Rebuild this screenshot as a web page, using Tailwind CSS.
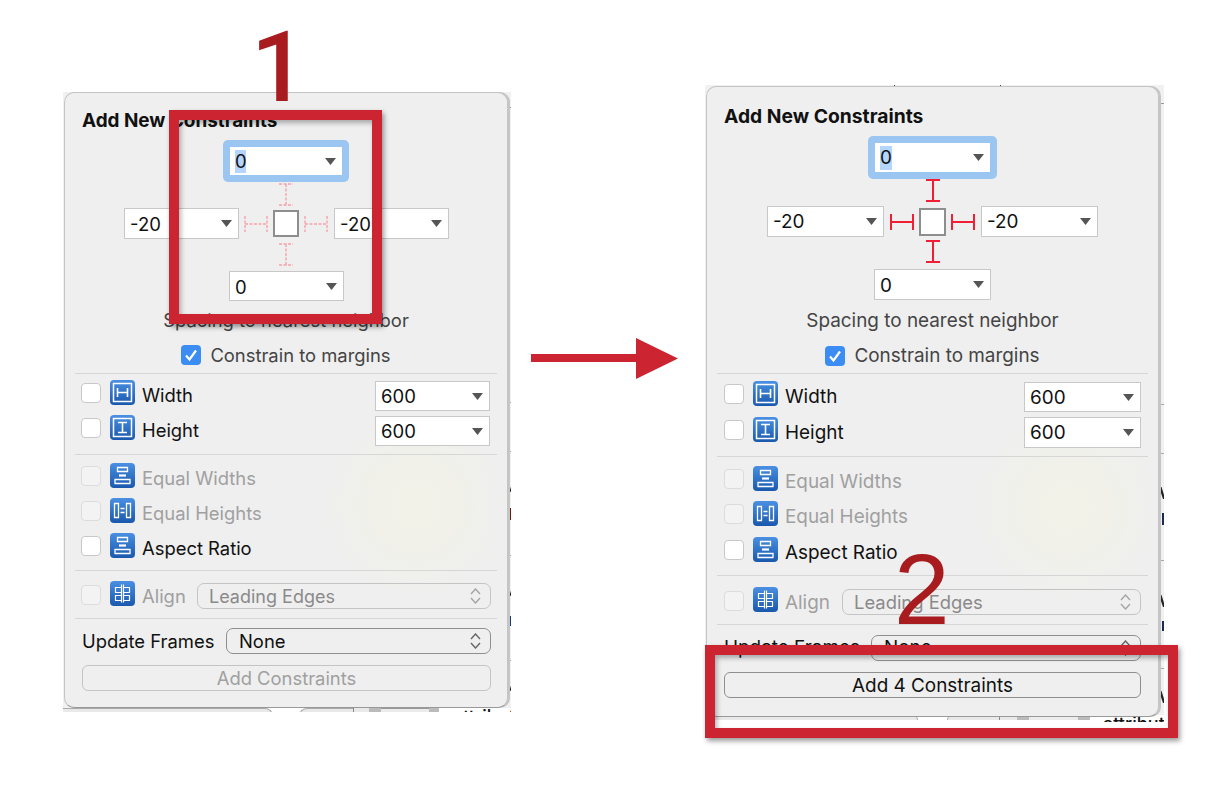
<!DOCTYPE html>
<html lang="en">
<head>
  <meta charset="UTF-8" />
  <title>Add New Constraints</title>
  <script src="https://cdn.jsdelivr.net/npm/@tailwindcss/browser@4"></script>
</head>
<body class="relative w-[1224px] h-[806px] bg-white overflow-hidden font-['Inter',sans-serif] text-[18.400px] leading-none text-[#111]">

  <!-- shared icons -->
  <svg class="absolute w-0 h-0">
    <defs>
      <linearGradient id="blue" x1="0" y1="0" x2="0" y2="1"><stop offset="0" stop-color="#4a90e2"/><stop offset="1" stop-color="#1a58ad"/></linearGradient>
    </defs>
    <symbol id="drop" viewBox="0 0 11 7"><path d="M0 0h11L5.500 7z" fill="#555"/></symbol>
    <symbol id="updown" viewBox="0 0 11 16"><path d="M1 6l4.500-5L10 6M1 10l4.500 5L10 10" fill="none" stroke="currentColor" stroke-width="1.400"/></symbol>
    <symbol id="tick" viewBox="0 0 20 20"><path d="M5 10.500l3.500 4L15 5.500" fill="none" stroke="#fff" stroke-width="2.200"/></symbol>
    <symbol id="i-width" viewBox="0 0 25 25"><rect width="25" height="25" rx="4" fill="url(#blue)"/><rect x="3.500" y="3.500" width="18" height="18" fill="none" stroke="#fff" stroke-width="1.500"/><path d="M7.500 8v9M17.500 8v9M7.500 12.500h10" fill="none" stroke="#fff" stroke-width="1.600"/></symbol>
    <symbol id="i-height" viewBox="0 0 25 25"><rect width="25" height="25" rx="4" fill="url(#blue)"/><rect x="3.500" y="3.500" width="18" height="18" fill="none" stroke="#fff" stroke-width="1.500"/><path d="M8 7.500h9M8 17.500h9M12.500 7.500v10" fill="none" stroke="#fff" stroke-width="1.600"/></symbol>
    <symbol id="i-eqw" viewBox="0 0 25 25"><rect width="25" height="25" rx="4" fill="url(#blue)"/><path d="M7.500 4.500h10v4h-10zM5 16.500h15v4H5z" fill="none" stroke="#fff" stroke-width="1.300"/><path d="M9 12.500h7" stroke="#fff" stroke-width="2.200"/></symbol>
    <symbol id="i-eqh" viewBox="0 0 25 25"><rect width="25" height="25" rx="4" fill="url(#blue)"/><path d="M4.500 5.500h4v14h-4zM16.500 5.500h4v14h-4z" fill="none" stroke="#fff" stroke-width="1.300"/><path d="M10.500 10.500h4M10.500 14.500h4" stroke="#fff" stroke-width="1.500"/></symbol>
    <symbol id="i-align" viewBox="0 0 25 25"><rect width="25" height="25" rx="4" fill="url(#blue)"/><path d="M11.500 3.500v18M13.500 3.500v18M11.500 6.500h-6v5h6M11.500 14.500h-6v5h6M13.500 6.500h6v5h-6M13.500 14.500h6v5h-6" fill="none" stroke="#fff" stroke-width="1.200"/></symbol>
    <symbol id="strut-v" viewBox="0 0 16 23"><path d="M1 1h14M8 1v21M1 22h14" fill="none" stroke="#f01f35" stroke-width="2"/></symbol>
    <symbol id="strut-h" viewBox="0 0 24 16"><path d="M1 0v16M1 8h22M23 0v16" fill="none" stroke="#f01f35" stroke-width="2"/></symbol>
    <symbol id="dash-v" viewBox="0 0 16 23"><path d="M1 1h14M1 22h14M8 1v21" fill="none" stroke="#f5a3ab" stroke-width="1.400" stroke-dasharray="3 1.500"/></symbol>
    <symbol id="dash-h" viewBox="0 0 24 16"><path d="M1 0v16M23 0v16M1 8h22" fill="none" stroke="#f5a3ab" stroke-width="1.400" stroke-dasharray="3 1.500"/></symbol>
    <symbol id="v-arm" viewBox="0 0 5 12"><path d="M0 0h2.500L5 8v4H4z" fill="#222"/></symbol>
  </svg>

  <!-- BEFORE: screenshot on the left -->
  <div class="absolute left-[63px] top-[92px] w-[448px] h-[620px] bg-[#f1f1f1] overflow-hidden">
    <!-- backdrop slivers around the popover -->
    <div class="absolute right-0 top-[15px] w-[3px] h-px bg-[#999]"></div>
    <div class="absolute right-0 top-[310px] w-[3px] h-px bg-[#aaa]"></div>
    <div class="absolute right-0 top-[359px] w-[3px] h-px bg-[#aaa]"></div>
    <svg class="absolute right-0 top-[392px] w-[3px] h-[9px]"><use href="#v-arm"/></svg>
    <div class="absolute right-0 top-[416px] w-[2px] h-[12px] bg-[#6b1a12]"></div>
    <div class="absolute right-0 top-[463px] w-[3px] h-px bg-[#aaa]"></div>
    <svg class="absolute right-0 top-[496px] w-[3px] h-[9px]"><use href="#v-arm"/></svg>
    <div class="absolute right-0 top-[524px] w-[2px] h-[10px] bg-[#1c3a78]"></div>
    <div class="absolute right-0 top-[568px] w-[3px] h-px bg-[#aaa]"></div>
    <svg class="absolute right-0 top-[591px] w-[3px] h-[9px]"><use href="#v-arm"/></svg>
    <div class="absolute left-0 top-[616px] w-full h-[4px] flex items-start bg-white">
      <div class="shrink-0 w-[210px] h-[8px] rounded-tr-[14px] border-t border-r border-[#aaa] bg-[#e9e9e9]"></div>
      <div class="shrink-0 w-[54px] h-[8px] ml-[26px] rounded-tl-[14px] border-t border-l border-[#aaa] bg-[#e9e9e9]"></div>
      <div class="shrink-0 w-px h-[8px] bg-[#888]"></div>
      <div class="shrink-0 w-[15px] h-[8px] bg-[#e9e9e9]"></div>
      <div class="shrink-0 w-[12px] h-[8px] bg-[#bbb]"></div>
      <div class="shrink-0 w-[48px] h-[8px] border-t border-[#999] bg-[#ececec]"></div>
      <div class="shrink-0 w-[10px] h-[8px] bg-[#bbb]"></div>
      <div class="shrink-0 ml-[14px] text-[18px] leading-[18px] font-medium">attribut</div>
    </div>

    <!-- popover -->
    <div class="absolute left-[1px] top-0 w-[444px] h-[616px] rounded-[10px] border border-[#c4c4c4] border-b-[#999] shadow-[2px_0_0_#c6c6c6] bg-[#efefef] bg-[radial-gradient(circle_at_350px_412px,rgba(245,245,222,0.45),rgba(245,245,222,0.3)_45px,rgba(239,239,239,0)_90px)] pt-[17px]">
      <h2 class="ml-[17px] font-bold h-[20px] flex items-center pt-[3px] text-[18.900px]">Add New Constraints</h2>

      <!-- spacing cross -->
      <div class="mt-[10px] ml-[158px] w-[126px] h-[42px] rounded-[5px] bg-[#9cc6f2] p-[7px]">
        <div class="h-full bg-white flex items-center justify-between pl-[5px] pr-[6px] text-[18.500px]"><span class="bg-[#b4d5fe] h-[23px] w-[11px] flex items-center pt-[1px]">0</span><svg class="w-[11px] h-[7px]"><use href="#drop"/></svg></div>
      </div>
      <svg class="mt-[1px] ml-[213px] w-[16px] h-[23px]"><use href="#dash-v"/></svg>
      <div class="mt-[2px] ml-[59px] h-[31px] flex items-center">
        <div class="w-[115px] h-full bg-white border border-[#c8c8c8] flex items-center justify-between pl-[5px] pr-[6px] text-[18.500px]"><span class="pt-[1px]">-20</span><svg class="w-[11px] h-[7px]"><use href="#drop"/></svg></div>
        <svg class="ml-[5px] w-[24px] h-[16px]"><use href="#dash-h"/></svg>
        <div class="ml-[5px] w-[26px] h-[27px] bg-white border-2 border-[#8e8e8e]"></div>
        <svg class="ml-[5px] w-[24px] h-[16px]"><use href="#dash-h"/></svg>
        <div class="ml-[6px] w-[115px] h-full bg-white border border-[#c8c8c8] flex items-center justify-between pl-[5px] pr-[6px] text-[18.500px]"><span class="pt-[1px]">-20</span><svg class="w-[11px] h-[7px]"><use href="#drop"/></svg></div>
      </div>
      <svg class="mt-[4px] ml-[213px] w-[16px] h-[23px]"><use href="#dash-v"/></svg>
      <div class="mt-[5px] ml-[164px] w-[115px] h-[30px] bg-white border border-[#c8c8c8] flex items-center justify-between pl-[5px] pr-[6px] text-[18.500px]"><span class="pt-[2px]">0</span><svg class="w-[11px] h-[7px]"><use href="#drop"/></svg></div>

      <p class="mt-[9px] h-[20px] flex items-center justify-center pt-[1px] text-[#444]">Spacing to nearest neighbor</p>
      <div class="mt-[15px] h-[20px] flex items-center justify-center gap-[9px] text-[#444]">
        <svg class="w-[20px] h-[20px] rounded-[4px] bg-[#3b8cf3]"><use href="#tick"/></svg>
        <span class="pt-[1px]">Constrain to margins</span>
      </div>
      <div class="mt-[8px] mx-[10px] h-px bg-[#d6d6d6]"></div>

      <!-- size rows -->
      <div class="mt-[6px] h-[31px] pl-[16px] pr-[17px] flex items-start">
        <div class="mt-[3px] w-[20px] h-[20px] rounded-[4px] border border-[#c8c8c8] bg-white"></div>
        <svg class="ml-[9px] w-[25px] h-[25px]"><use href="#i-width"/></svg>
        <span class="ml-[7px] h-[31px] flex items-center">Width</span>
        <div class="ml-auto mt-[1px] w-[115px] h-[30px] bg-white border border-[#c8c8c8] flex items-center justify-between pl-[5px] pr-[6px] text-[18.500px]"><span class="pt-[1px]">600</span><svg class="w-[11px] h-[7px]"><use href="#drop"/></svg></div>
      </div>
      <div class="mt-[4px] h-[31px] pl-[16px] pr-[17px] flex items-start">
        <div class="mt-[3px] w-[20px] h-[20px] rounded-[4px] border border-[#c8c8c8] bg-white"></div>
        <svg class="ml-[9px] w-[25px] h-[25px]"><use href="#i-height"/></svg>
        <span class="ml-[7px] h-[31px] flex items-center">Height</span>
        <div class="ml-auto mt-[1px] w-[115px] h-[30px] bg-white border border-[#c8c8c8] flex items-center justify-between pl-[5px] pr-[6px] text-[18.500px]"><span class="pt-[1px]">600</span><svg class="w-[11px] h-[7px]"><use href="#drop"/></svg></div>
      </div>
      <div class="mt-[8px] mx-[10px] h-px bg-[#d6d6d6]"></div>

      <!-- equal rows -->
      <div class="mt-[8px] h-[25px] pl-[16px] flex items-center">
        <div class="w-[20px] h-[20px] rounded-[4px] border border-[#dcdcdc] bg-[#f3f3f3]"></div>
        <svg class="ml-[9px] w-[25px] h-[25px]"><use href="#i-eqw"/></svg>
        <span class="ml-[7px] mt-[6px] text-[#a0a0a0]">Equal Widths</span>
      </div>
      <div class="mt-[10px] h-[25px] pl-[16px] flex items-center">
        <div class="w-[20px] h-[20px] rounded-[4px] border border-[#dcdcdc] bg-[#f3f3f3]"></div>
        <svg class="ml-[9px] w-[25px] h-[25px]"><use href="#i-eqh"/></svg>
        <span class="ml-[7px] mt-[6px] text-[#a0a0a0]">Equal Heights</span>
      </div>
      <div class="mt-[10px] h-[25px] pl-[16px] flex items-center">
        <div class="w-[20px] h-[20px] rounded-[4px] border border-[#c8c8c8] bg-white"></div>
        <svg class="ml-[9px] w-[25px] h-[25px]"><use href="#i-eqw"/></svg>
        <span class="ml-[7px] mt-[6px]">Aspect Ratio</span>
      </div>
      <div class="mt-[12px] mx-[10px] h-px bg-[#d6d6d6]"></div>

      <!-- align -->
      <div class="mt-[10px] h-[28px] pl-[16px] pr-[16px] flex items-start">
        <div class="mt-[4px] w-[20px] h-[20px] rounded-[4px] border border-[#dcdcdc] bg-[#f3f3f3]"></div>
        <svg class="ml-[9px] w-[25px] h-[25px]"><use href="#i-align"/></svg>
        <span class="ml-[7px] h-[31px] flex items-center text-[#a0a0a0]">Align</span>
        <div class="ml-auto mt-[2px] w-[294px] h-[26px] rounded-[7px] border border-[#c4c4c4] flex items-center justify-between pl-[11px] pr-[9px] text-[18px] text-[#8a8a8a]"><span class="pt-[1px]">Leading Edges</span><svg class="w-[11px] h-[16px] text-[#a5a5a5]"><use href="#updown"/></svg></div>
      </div>
      <div class="mt-[9px] mx-[10px] h-px bg-[#d6d6d6]"></div>

      <!-- update frames and submit -->
      <div class="mt-[9px] h-[26px] pl-[17px] pr-[16px] flex items-center">
        <span class="pt-[1px]">Update Frames</span>
        <div class="ml-auto w-[265px] h-[26px] rounded-[7px] border border-[#8f8f8f] flex items-center justify-between pl-[12px] pr-[9px]"><span class="pt-[1px]">None</span><svg class="w-[11px] h-[16px] text-[#666]"><use href="#updown"/></svg></div>
      </div>
      <div class="mt-[11px] ml-[17px] w-[409px] h-[26px] pt-[1px] rounded-[6px] border border-[#c4c4c4] flex items-center justify-center text-[#a0a0a0]">Add Constraints</div>
    </div>
  </div>

  <!-- AFTER: screenshot on the right -->
  <div class="absolute left-[705px] top-[85px] w-[459px] h-[637px] bg-[#f1f1f1] overflow-hidden text-[18.900px]">
    <div class="absolute left-[189px] top-0 w-px h-[2px] bg-[#444]"></div>
    <div class="absolute left-[295px] top-0 w-px h-[2px] bg-[#444]"></div>
    <div class="absolute right-0 top-[18px] w-[5px] h-px bg-[#999]"></div>
    <div class="absolute right-0 top-[319px] w-[5px] h-px bg-[#aaa]"></div>
    <div class="absolute right-0 top-[368px] w-[5px] h-px bg-[#aaa]"></div>
    <svg class="absolute right-0 top-[402px] w-[5px] h-[12px]"><use href="#v-arm"/></svg>
    <div class="absolute right-0 top-[428px] w-[2px] h-[12px] bg-[#1c2a5a]"></div>
    <div class="absolute right-0 top-[475px] w-[5px] h-px bg-[#aaa]"></div>
    <svg class="absolute right-0 top-[510px] w-[5px] h-[12px]"><use href="#v-arm"/></svg>
    <div class="absolute right-0 top-[536px] w-[2px] h-[10px] bg-[#1c2a5a]"></div>
    <div class="absolute right-0 top-[583px] w-[5px] h-px bg-[#aaa]"></div>
    <svg class="absolute right-0 top-[606px] w-[5px] h-[12px]"><use href="#v-arm"/></svg>
    <div class="absolute left-0 top-[630px] w-full h-[7px] flex items-start bg-white">
      <div class="shrink-0 w-[213px] h-[5px] rounded-tr-[14px] border-t border-r border-[#aaa] bg-[#e9e9e9]"></div>
      <div class="shrink-0 w-[52px] h-[5px] ml-[29px] rounded-tl-[14px] border-t border-l border-[#aaa] bg-[#e9e9e9]"></div>
      <div class="shrink-0 w-px h-[5px] bg-[#888]"></div>
      <div class="shrink-0 w-[17px] h-[5px] bg-[#e9e9e9]"></div>
      <div class="shrink-0 w-[12px] h-[5px] bg-[#bbb]"></div>
      <div class="shrink-0 w-[49px] h-[5px] border-t border-[#999] bg-[#ececec]"></div>
      <div class="shrink-0 w-[12px] h-[5px] bg-[#bbb]"></div>
      <div class="shrink-0 ml-[13px] text-[18px] leading-[18px] font-medium">attribut</div>
    </div>

    <div class="absolute left-[1px] top-[1px] w-[453px] h-[631px] rounded-[10px] border border-[#c4c4c4] border-b-[#999] shadow-[2px_0_0_#c6c6c6] bg-[#efefef] bg-[radial-gradient(circle_at_360px_420px,rgba(245,245,222,0.45),rgba(245,245,222,0.3)_45px,rgba(239,239,239,0)_92px)] pt-[19px]">
      <h2 class="ml-[17px] font-bold h-[20px] flex items-center pt-[2px] text-[19.300px]">Add New Constraints</h2>

      <div class="mt-[10px] ml-[161px] w-[129px] h-[43px] rounded-[5px] bg-[#9cc6f2] p-[7px]">
        <div class="h-full bg-white flex items-center justify-between pl-[5px] pr-[6px] text-[18.900px]"><span class="bg-[#b4d5fe] h-[24px] w-[12px] flex items-center pt-[2px]">0</span><svg class="w-[11px] h-[7px]"><use href="#drop"/></svg></div>
      </div>
      <svg class="ml-[218px] w-[16px] h-[23px]"><use href="#strut-v"/></svg>
      <div class="mt-[4px] ml-[60px] h-[31px] flex items-center">
        <div class="w-[117px] h-full bg-white border border-[#c8c8c8] flex items-center justify-between pl-[5px] pr-[6px]"><span class="pt-[2px]">-20</span><svg class="w-[11px] h-[7px]"><use href="#drop"/></svg></div>
        <svg class="ml-[6px] w-[24px] h-[16px]"><use href="#strut-h"/></svg>
        <div class="ml-[5px] w-[27px] h-[28px] bg-white border-2 border-[#8e8e8e]"></div>
        <svg class="ml-[5px] w-[24px] h-[16px]"><use href="#strut-h"/></svg>
        <div class="ml-[6px] w-[117px] h-full bg-white border border-[#c8c8c8] flex items-center justify-between pl-[5px] pr-[6px]"><span class="pt-[2px]">-20</span><svg class="w-[11px] h-[7px]"><use href="#drop"/></svg></div>
      </div>
      <svg class="mt-[3px] ml-[218px] w-[16px] h-[23px]"><use href="#strut-v"/></svg>
      <div class="mt-[6px] ml-[167px] w-[117px] h-[31px] bg-white border border-[#c8c8c8] flex items-center justify-between pl-[5px] pr-[6px]"><span class="pt-[3px]">0</span><svg class="w-[11px] h-[7px]"><use href="#drop"/></svg></div>

      <p class="mt-[10px] h-[20px] flex items-center justify-center pt-[2px] text-[#444]">Spacing to nearest neighbor</p>
      <div class="mt-[15px] h-[21px] flex items-center justify-center gap-[9px] text-[#444]">
        <svg class="w-[20px] h-[20px] rounded-[4px] bg-[#3b8cf3]"><use href="#tick"/></svg>
        <span class="pt-[1px]">Constrain to margins</span>
      </div>
      <div class="mt-[7px] mx-[10px] h-px bg-[#d6d6d6]"></div>

      <div class="mt-[7px] h-[31px] pl-[17px] pr-[17px] flex items-start">
        <div class="mt-[3px] w-[20px] h-[20px] rounded-[4px] border border-[#c8c8c8] bg-white"></div>
        <svg class="ml-[9px] w-[25px] h-[25px]"><use href="#i-width"/></svg>
        <span class="ml-[7px] h-[31px] pt-[2px] flex items-center">Width</span>
        <div class="ml-auto mt-[1px] w-[117px] h-[30px] bg-white border border-[#c8c8c8] flex items-center justify-between pl-[5px] pr-[6px]"><span class="pt-[2px]">600</span><svg class="w-[11px] h-[7px]"><use href="#drop"/></svg></div>
      </div>
      <div class="mt-[5px] h-[31px] pl-[17px] pr-[17px] flex items-start">
        <div class="mt-[3px] w-[20px] h-[20px] rounded-[4px] border border-[#c8c8c8] bg-white"></div>
        <svg class="ml-[9px] w-[25px] h-[25px]"><use href="#i-height"/></svg>
        <span class="ml-[7px] h-[31px] pt-[2px] flex items-center">Height</span>
        <div class="ml-auto w-[117px] h-[31px] bg-white border border-[#c8c8c8] flex items-center justify-between pl-[5px] pr-[6px]"><span class="pt-[2px]">600</span><svg class="w-[11px] h-[7px]"><use href="#drop"/></svg></div>
      </div>
      <div class="mt-[8px] mx-[10px] h-px bg-[#d6d6d6]"></div>

      <div class="mt-[9px] h-[25px] pl-[17px] flex items-center">
        <div class="w-[20px] h-[20px] rounded-[4px] border border-[#dcdcdc] bg-[#f3f3f3]"></div>
        <svg class="ml-[9px] w-[25px] h-[25px]"><use href="#i-eqw"/></svg>
        <span class="ml-[7px] mt-[7px] text-[#a0a0a0]">Equal Widths</span>
      </div>
      <div class="mt-[10px] h-[25px] pl-[17px] flex items-center">
        <div class="w-[20px] h-[20px] rounded-[4px] border border-[#dcdcdc] bg-[#f3f3f3]"></div>
        <svg class="ml-[9px] w-[25px] h-[25px]"><use href="#i-eqh"/></svg>
        <span class="ml-[7px] mt-[8px] text-[#a0a0a0]">Equal Heights</span>
      </div>
      <div class="mt-[11px] h-[25px] pl-[17px] flex items-center">
        <div class="w-[20px] h-[20px] rounded-[4px] border border-[#c8c8c8] bg-white"></div>
        <svg class="ml-[9px] w-[25px] h-[25px]"><use href="#i-eqw"/></svg>
        <span class="ml-[7px] mt-[7px]">Aspect Ratio</span>
      </div>
      <div class="mt-[13px] mx-[10px] h-px bg-[#d6d6d6]"></div>

      <div class="mt-[11px] h-[28px] pl-[17px] pr-[17px] flex items-start">
        <div class="mt-[4px] w-[20px] h-[20px] rounded-[4px] border border-[#dcdcdc] bg-[#f3f3f3]"></div>
        <svg class="ml-[9px] w-[25px] h-[25px]"><use href="#i-align"/></svg>
        <span class="ml-[7px] h-[32px] flex items-center text-[#a0a0a0]">Align</span>
        <div class="ml-auto mt-[2px] w-[299px] h-[26px] rounded-[7px] border border-[#c4c4c4] flex items-center justify-between pl-[11px] pr-[9px] text-[18.400px] text-[#8a8a8a]">Leading Edges<svg class="w-[11px] h-[16px] text-[#a5a5a5]"><use href="#updown"/></svg></div>
      </div>
      <div class="mt-[9px] mx-[10px] h-px bg-[#d6d6d6]"></div>

      <div class="mt-[10px] h-[26px] pl-[17px] pr-[17px] flex items-center">
        <span class="pt-[1px]">Update Frames</span>
        <div class="ml-auto w-[270px] h-[26px] rounded-[7px] border border-[#8f8f8f] flex items-center justify-between pl-[12px] pr-[9px]">None<svg class="w-[11px] h-[16px] text-[#666]"><use href="#updown"/></svg></div>
      </div>
      <div class="mt-[11px] ml-[17px] w-[417px] h-[26px] pt-[2px] rounded-[6px] border border-[#8f8f8f] flex items-center justify-center">Add 4 Constraints</div>
    </div>
  </div>

  <!-- annotations on top of the screenshots -->
  <div class="absolute left-[251px] top-[18px] font-['Roboto',sans-serif] font-medium text-[98px] leading-[100px] text-[#a81c1f]">1</div>
  <div class="absolute left-[169px] top-[110px] w-[213px] h-[214px] border-[10px] border-[#cc2430] shadow-[2px_3px_5px_rgba(0,0,0,0.4),inset_2px_3px_5px_rgba(0,0,0,0.3)]"></div>

  <svg class="absolute left-[531px] top-[338px] w-[147px] h-[41px]" viewBox="0 0 147 41"><path d="M0 16h105V0l42 20.500L105 41V24H0z" fill="#cc2430"/></svg>

  <div class="absolute left-[894px] top-[539px] font-['Liberation_Sans',sans-serif] text-[100px] leading-[100px] text-[#a81c1f]">2</div>
  <div class="absolute left-[705px] top-[645px] w-[473px] h-[93px] border-[10px] border-[#cc2430] shadow-[2px_3px_5px_rgba(0,0,0,0.4),inset_2px_3px_5px_rgba(0,0,0,0.3)]"></div>

</body>
</html>
